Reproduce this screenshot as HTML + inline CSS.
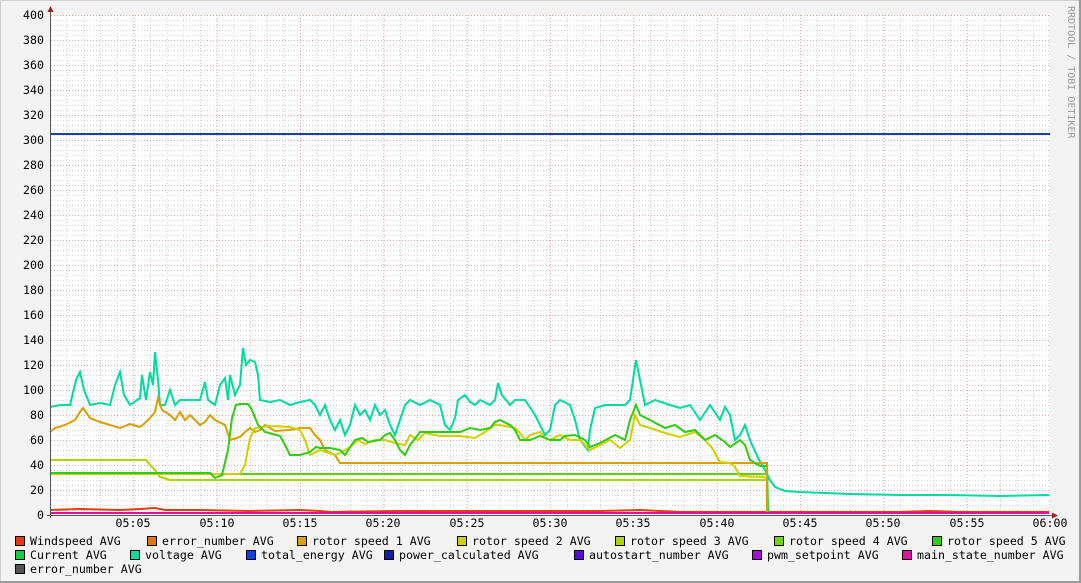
<!DOCTYPE html>
<html><head><meta charset="utf-8"><style>
html,body{margin:0;padding:0;background:#f3f3f3;}
svg{display:block;}
text{font-family:"DejaVu Sans Mono","Liberation Mono",monospace;}
</style></head><body>
<svg width="1081" height="583" viewBox="0 0 1081 583" xmlns="http://www.w3.org/2000/svg">
<defs>
<pattern id="minh" x="0" y="15" width="1000" height="5" patternUnits="userSpaceOnUse"><line x1="0" y1="0.5" x2="1000" y2="0.5" stroke="#d8d8d8" stroke-dasharray="1,2" shape-rendering="crispEdges"/></pattern>
<pattern id="minv" x="50" y="0" width="16.6667" height="600" patternUnits="userSpaceOnUse"><line x1="0.5" y1="0" x2="0.5" y2="600" stroke="#d0d0d0" stroke-dasharray="1,2" shape-rendering="crispEdges"/></pattern>
<pattern id="majh" x="0" y="15" width="1000" height="25" patternUnits="userSpaceOnUse"><line x1="0" y1="0.5" x2="1000" y2="0.5" stroke="#e8a8a8" stroke-dasharray="1,2" shape-rendering="crispEdges"/></pattern>
<pattern id="majv" x="50" y="0" width="83.3333" height="600" patternUnits="userSpaceOnUse"><line x1="0.5" y1="0" x2="0.5" y2="600" stroke="#e8a8a8" stroke-dasharray="1,2" shape-rendering="crispEdges"/></pattern>
</defs>
<rect x="0" y="0" width="1081" height="583" fill="#f3f3f3"/>
<line x1="0" y1="0.5" x2="1081" y2="0.5" stroke="#cfcfcf"/>
<line x1="0.5" y1="0" x2="0.5" y2="583" stroke="#cfcfcf"/>
<line x1="1080" y1="0" x2="1080" y2="583" stroke="#9a9a9a" stroke-width="2"/>
<line x1="0" y1="582" x2="1081" y2="582" stroke="#9a9a9a" stroke-width="2"/>
<rect x="50" y="15" width="1000" height="500" fill="#ffffff"/>
<rect x="50" y="15" width="1000" height="500" fill="url(#minh)"/>
<rect x="50" y="15" width="1000" height="500" fill="url(#minv)"/>
<rect x="50" y="15" width="1000" height="500" fill="url(#majh)"/>
<rect x="50" y="15" width="1000" height="500" fill="url(#majv)"/>
<g font-size="11.6" fill="#000" text-anchor="end">
<text x="44" y="19">400</text><text x="44" y="44">380</text><text x="44" y="69">360</text><text x="44" y="94">340</text><text x="44" y="119">320</text><text x="44" y="144">300</text><text x="44" y="169">280</text><text x="44" y="194">260</text><text x="44" y="219">240</text><text x="44" y="244">220</text><text x="44" y="269">200</text><text x="44" y="294">180</text><text x="44" y="319">160</text><text x="44" y="344">140</text><text x="44" y="369">120</text><text x="44" y="394">100</text><text x="44" y="419">80</text><text x="44" y="444">60</text><text x="44" y="469">40</text><text x="44" y="494">20</text><text x="44" y="519">0</text>
</g>
<g font-size="11.6" fill="#000" text-anchor="middle">
<text x="133" y="527">05:05</text><text x="217" y="527">05:10</text><text x="300" y="527">05:15</text><text x="383" y="527">05:20</text><text x="467" y="527">05:25</text><text x="550" y="527">05:30</text><text x="633" y="527">05:35</text><text x="717" y="527">05:40</text><text x="800" y="527">05:45</text><text x="883" y="527">05:50</text><text x="967" y="527">05:55</text><text x="1050" y="527">06:00</text>
</g>
<text transform="translate(1068,6) rotate(90)" font-size="10" fill="#999">RRDTOOL / TOBI OETIKER</text>

<line x1="50" y1="134" x2="1050" y2="134" stroke="#1a40b0" stroke-width="2"/>
<g fill="none" stroke-width="2" stroke-linejoin="miter">
<polyline stroke="#e83a10" points="50,510 80,509 120,510 140,509 155,508 165,510 200,510 250,511 300,510 320,511 330,512 400,511 600,511 640,510 680,512 760,512 800,512 850,512 900,512 930,511 960,512 1049,512"/>
<polyline stroke="#e0109a" points="50,513 1049,513"/>
<polyline stroke="#20c040" points="767,466 768,512"/>
<polyline stroke="#00dca0" points="50,407 60,405 70,405 76,380 80,372 84,390 90,405 100,403 110,405 115,385 120,372 124,395 130,405 140,398 142,375 146,400 150,372 153,385 155,352 158,380 160,405 165,405 170,390 175,405 180,400 200,400 205,382 208,400 215,405 220,385 225,378 228,400 230,375 235,395 240,385 243,348 246,365 250,360 255,362 258,375 260,400 270,402 280,400 290,405 300,402 310,400 315,405 320,415 325,405 330,420 335,430 340,420 345,435 350,425 355,405 360,415 365,410 370,420 375,405 380,415 385,410 390,425 395,435 400,420 405,405 410,400 420,405 430,400 440,405 445,425 450,430 455,418 458,400 465,395 470,402 475,405 480,400 490,405 495,400 498,383 502,395 510,405 515,400 525,400 535,415 545,435 550,430 555,405 560,400 570,405 575,420 580,440 588,450 590,430 595,408 605,405 625,405 630,400 636,360 640,380 645,405 655,400 670,405 680,408 690,405 700,420 710,405 720,420 725,407 730,415 735,440 740,435 745,425 750,440 758,458 765,470 770,480 775,487 785,491 800,492 850,494 900,495 950,495 1000,496 1049,495"/>
<polyline stroke="#d8a000" points="50,432 55,428 65,425 75,420 80,412 83,408 90,418 100,422 110,425 120,428 130,424 140,427 145,423 150,418 155,412 158,398 162,410 170,415 175,420 180,412 185,420 190,415 195,420 200,425 205,422 210,415 215,420 225,425 230,440 240,437 245,432 250,428 255,432 260,430 265,425 275,431 290,430 300,428 310,428 315,435 320,440 325,450 335,455 340,463 767,463 767,512"/>
<polyline stroke="#a8d800" points="50,460 146,460 150,465 155,470 160,477 170,480 766,480"/>
<polyline stroke="#60d000" points="50,474 766,474"/>
<polyline stroke="#d0d000" points="50,474 240,474 245,465 250,438 255,428 270,426 290,427 300,430 305,440 310,455 320,450 335,455 342,452 350,447 358,440 365,444 375,440 385,440 395,443 400,444 405,445 410,435 418,440 425,433 440,436 460,436 475,438 485,432 495,425 500,425 510,427 515,428 520,433 525,440 530,435 540,432 545,438 550,440 560,435 570,440 580,440 590,450 600,445 610,440 620,448 630,440 635,415 640,425 650,428 665,433 680,437 695,432 705,440 712,448 720,462 730,463 735,467 740,476 763,477 766,478"/>
<polyline stroke="#30cc10" points="50,473 210,473 215,478 222,475 228,450 232,418 236,405 240,404 248,404 252,410 258,425 265,432 280,436 285,445 290,455 300,455 310,452 316,447 320,448 330,448 340,450 345,455 355,440 362,438 368,442 380,440 385,435 390,433 395,440 400,450 405,455 410,445 420,432 440,432 460,432 470,428 480,430 490,428 495,422 500,420 510,425 515,430 520,440 530,440 535,438 540,436 550,440 560,440 565,436 575,435 585,440 590,447 600,443 615,435 625,440 630,420 636,405 640,415 650,420 665,428 675,425 685,432 695,430 705,440 715,435 725,442 730,447 740,440 745,445 750,460 760,466 767,466"/>
</g>
<line x1="50.5" y1="10" x2="50.5" y2="518" stroke="#555"/>
<line x1="47" y1="515.5" x2="1055" y2="515.5" stroke="#555"/>
<polygon points="47.5,12 53.5,12 50.5,6" fill="#a02020"/>
<polygon points="1052,512.5 1052,518.5 1058,515.5" fill="#a02020"/>

<g font-size="11.6" fill="#000" stroke="#000" stroke-width="1">
<rect x="15.5" y="536.5" width="9" height="9" fill="#e83a10"/>
<rect x="147.5" y="536.5" width="9" height="9" fill="#e07800"/>
<rect x="297.5" y="536.5" width="9" height="9" fill="#d8a000"/>
<rect x="457.5" y="536.5" width="9" height="9" fill="#d0d000"/>
<rect x="615.5" y="536.5" width="9" height="9" fill="#a8d800"/>
<rect x="774.5" y="536.5" width="9" height="9" fill="#70d800"/>
<rect x="932.5" y="536.5" width="9" height="9" fill="#30cc10"/>
<rect x="15.5" y="550.5" width="9" height="9" fill="#10d040"/>
<rect x="130.5" y="550.5" width="9" height="9" fill="#10d8a0"/>
<rect x="246.5" y="550.5" width="9" height="9" fill="#1040e0"/>
<rect x="384.5" y="550.5" width="9" height="9" fill="#1020a0"/>
<rect x="574.5" y="550.5" width="9" height="9" fill="#5010d8"/>
<rect x="752.5" y="550.5" width="9" height="9" fill="#a010d8"/>
<rect x="902.5" y="550.5" width="9" height="9" fill="#e010a0"/>
<rect x="15.5" y="564.5" width="9" height="9" fill="#555555"/>
</g>
<g font-size="11.6" fill="#000">
<text x="30" y="545">Windspeed AVG</text>
<text x="162" y="545">error_number AVG</text>
<text x="312" y="545">rotor speed 1 AVG</text>
<text x="472" y="545">rotor speed 2 AVG</text>
<text x="630" y="545">rotor speed 3 AVG</text>
<text x="789" y="545">rotor speed 4 AVG</text>
<text x="947" y="545">rotor speed 5 AVG</text>
<text x="30" y="559">Current AVG</text>
<text x="145" y="559">voltage AVG</text>
<text x="261" y="559">total_energy AVG</text>
<text x="399" y="559">power_calculated AVG</text>
<text x="589" y="559">autostart_number AVG</text>
<text x="767" y="559">pwm_setpoint AVG</text>
<text x="917" y="559">main_state_number AVG</text>
<text x="30" y="573">error_number AVG</text>
</g>
</svg>
</body></html>
